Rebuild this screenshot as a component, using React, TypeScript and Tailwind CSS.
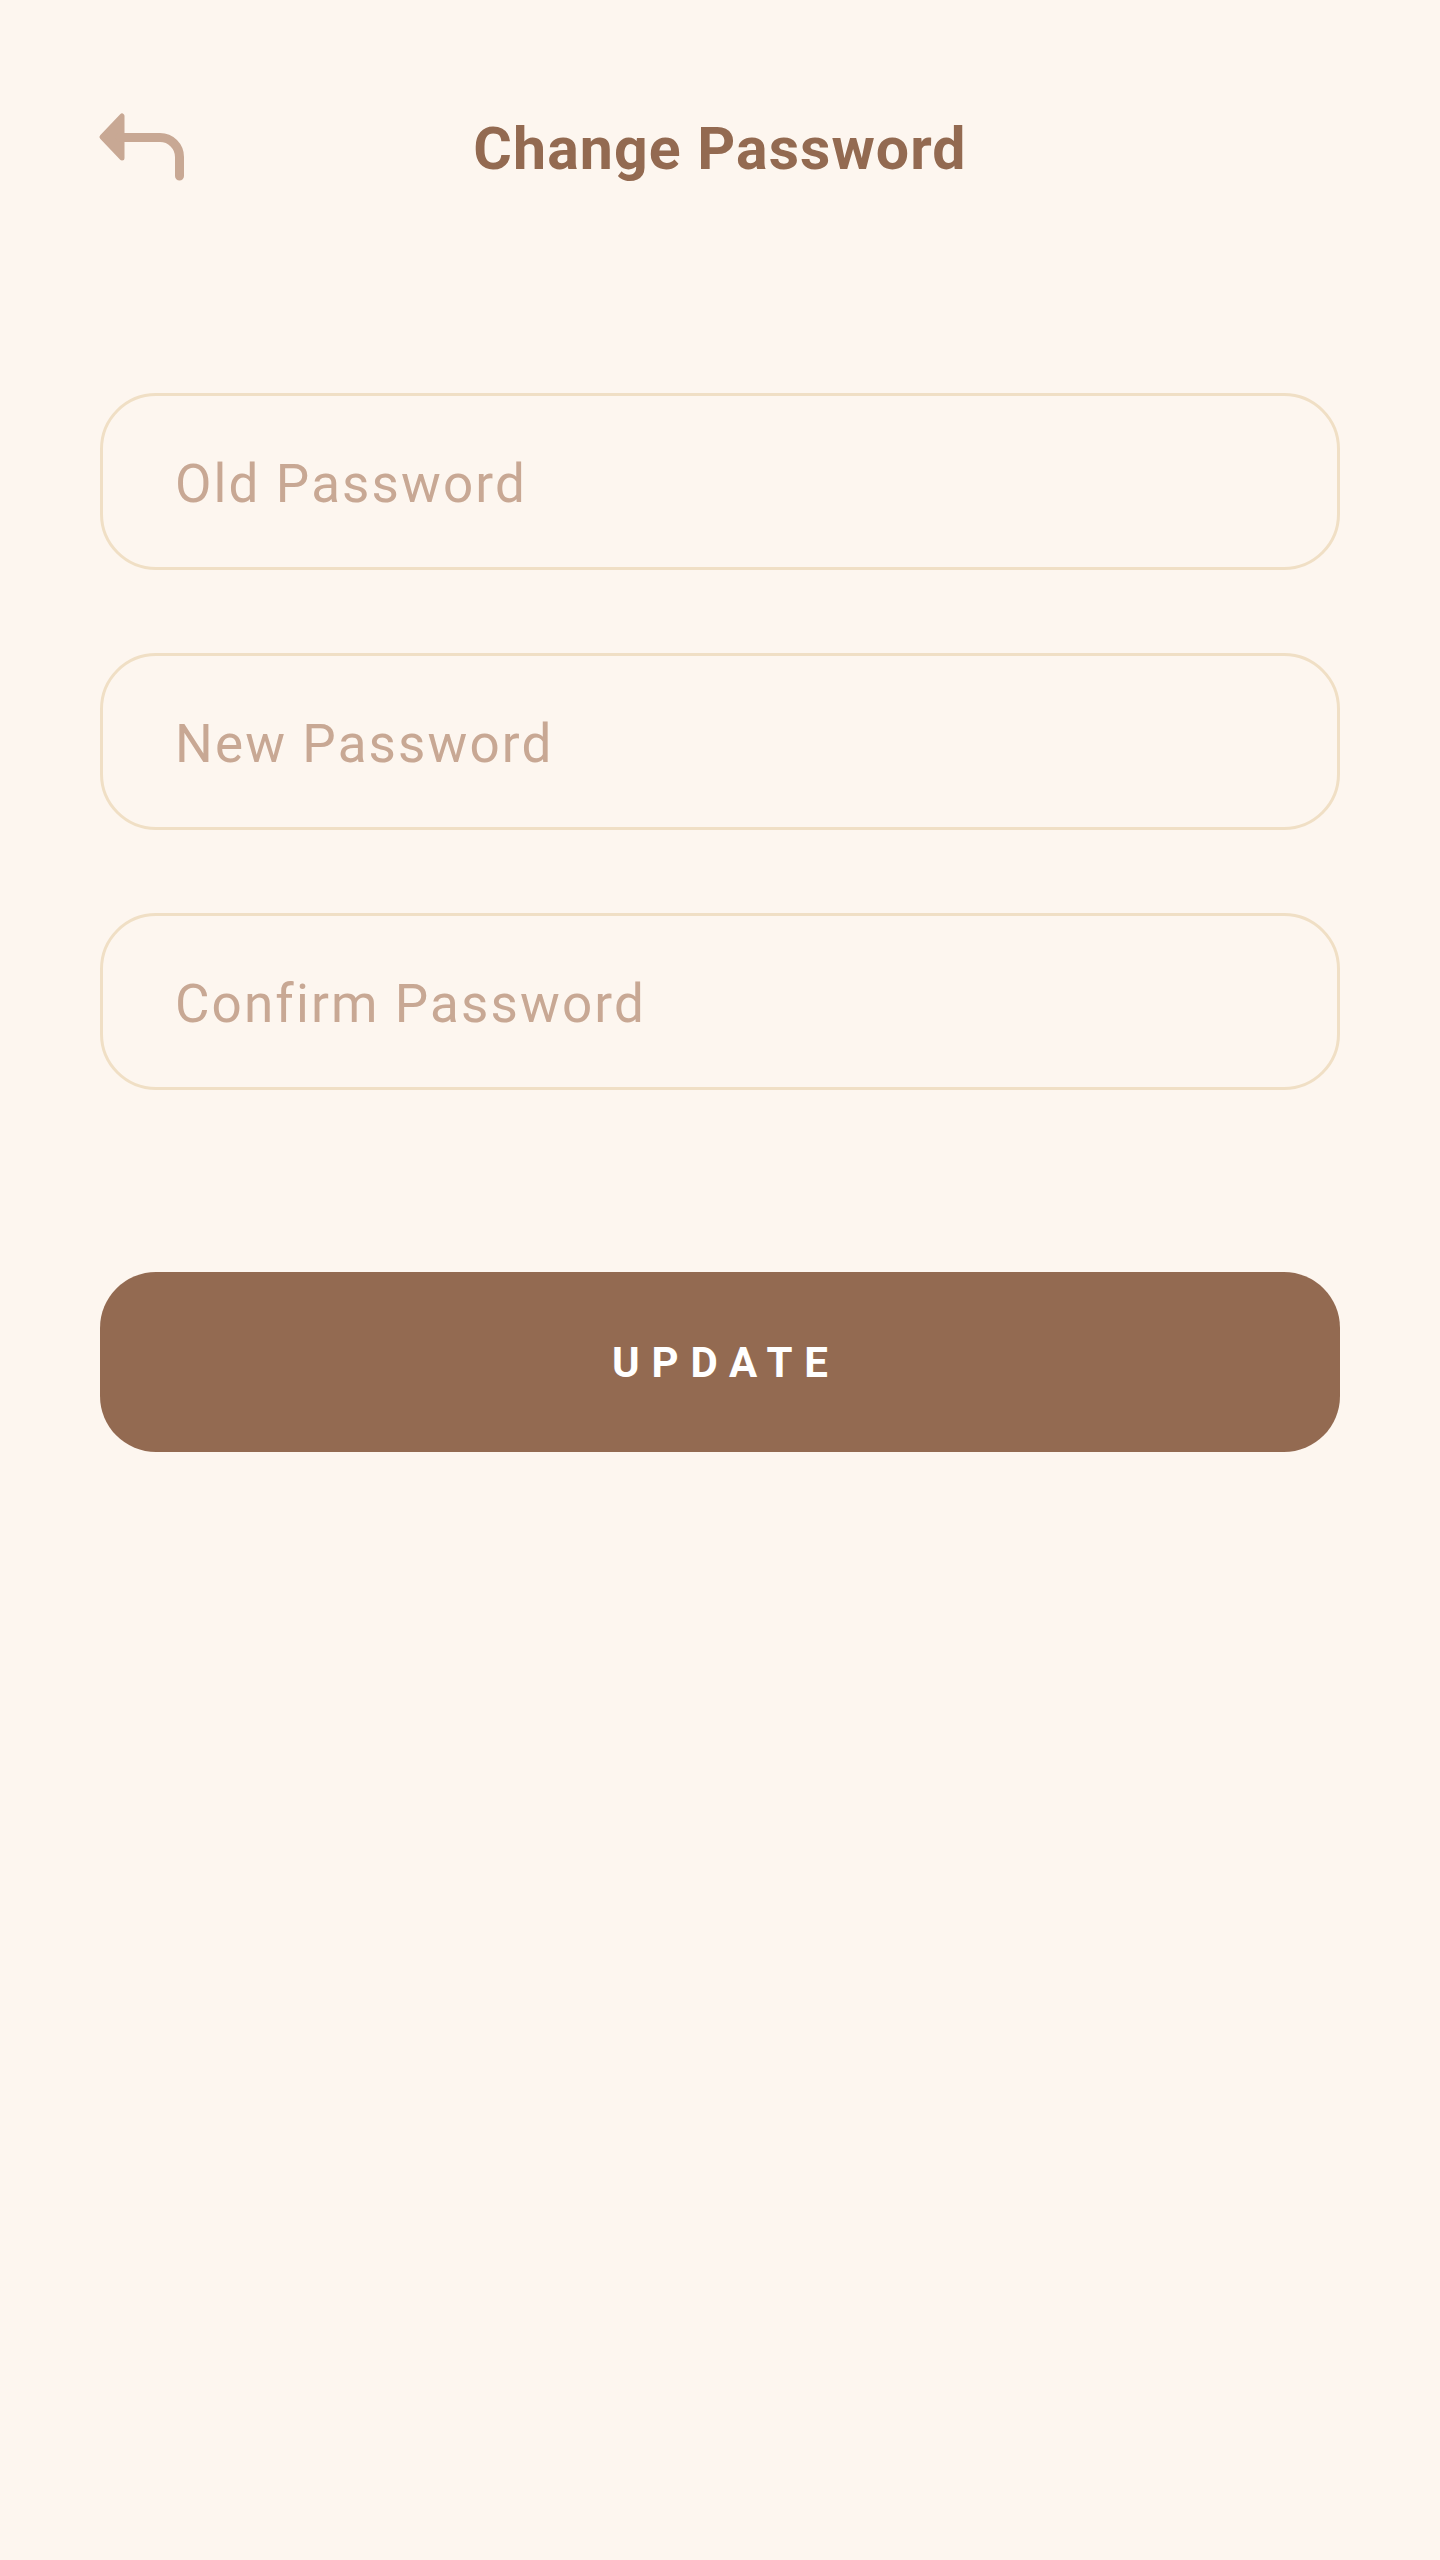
import { useState } from 'react';

function BackArrow() {
    return (
        <svg width="88" height="72" viewBox="0 0 88 72" fill="none" className="text-[#c8a894]">
            {/* arrow head */}
            <path d="M4 26 L24 5 L24 47 Z" fill="currentColor" stroke="currentColor" strokeWidth="5" strokeLinejoin="round" />
            {/* stem */}
            <path d="M22 26.5 H62 A19.5 19.5 0 0 1 81.5 46 V65" stroke="currentColor" strokeWidth="9" strokeLinecap="round" />
        </svg>
    );
}

function Field({ placeholder, value, onChange }: { placeholder: string; value: string; onChange: (v: string) => void }) {
    return (
        <input
            type="password"
            placeholder={placeholder}
            value={value}
            onChange={(e) => onChange(e.target.value)}
            className="h-[177px] w-full rounded-[56px] border-[3px] border-[#f0dfc5] bg-transparent pl-[72px] pr-[72px] pt-[5px] text-[53px] tracking-[0.04em] text-[#936a51] placeholder:text-[#c8a894] outline-none"
        />
    );
}

export default function App() {
    const [oldPw, setOldPw] = useState('');
    const [newPw, setNewPw] = useState('');
    const [confirmPw, setConfirmPw] = useState('');

    return (
        <div className="min-h-[2560px] bg-[#fdf6ef] px-[100px] pt-[102px] font-['Roboto',sans-serif]">
            {/* Header */}
            <div className="grid h-[92px] grid-cols-[1fr_auto_1fr] items-center">
                <button className="flex w-fit -ml-[2px] -mt-[3px]">
                    <BackArrow />
                </button>
                <h1 className="text-[59px] font-bold leading-none tracking-[0.018em] text-[#936a51]">Change Password</h1>
                <div />
            </div>

            {/* Form */}
            <div className="mt-[199px] flex flex-col gap-[83px]">
                <Field placeholder="Old Password" value={oldPw} onChange={setOldPw} />
                <Field placeholder="New Password" value={newPw} onChange={setNewPw} />
                <Field placeholder="Confirm Password" value={confirmPw} onChange={setConfirmPw} />
            </div>

            <button className="mt-[182px] flex h-[180px] w-full items-center justify-center rounded-[56px] bg-[#936a51] text-[42px] font-bold tracking-[0.28em] text-white">
                <span className="pl-[0.28em]">UPDATE</span>
            </button>
        </div>
    );
}
